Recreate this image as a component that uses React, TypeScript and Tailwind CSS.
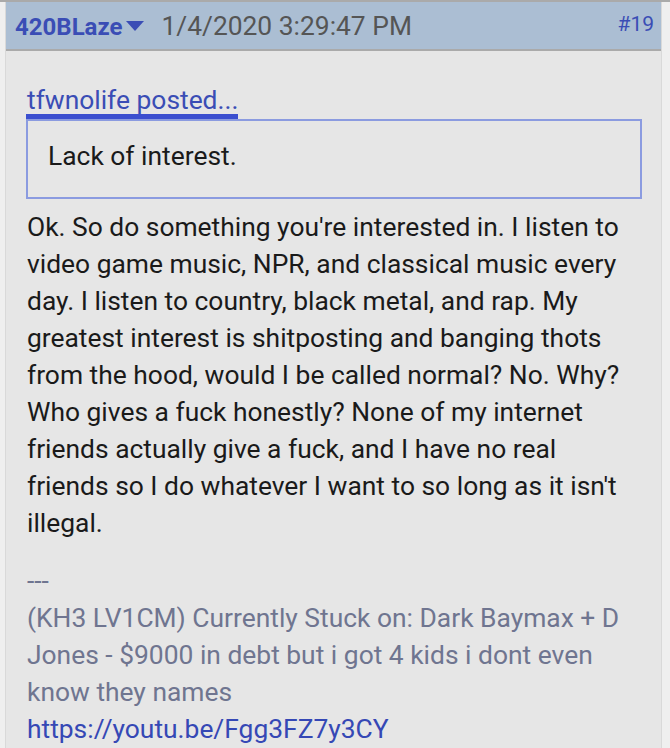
import React from "react";

export default function App() {
  return (
    <div className="min-h-[748px] w-full bg-[#efefef] font-['Roboto',sans-serif]">
      <div className="h-[2px] w-full bg-[#aaaaaa]" />
      <div className="ml-[5px] mr-[8px] border-x border-[#d9d9d9] bg-[#e6e6e6] min-h-[746px]">
        <div className="flex h-[49px] items-center border-b-2 border-[#aaaaaa] bg-[#abbed3] pt-[3px] pl-[9px] pr-[7px]">
          <span className="text-[24px] font-bold text-[#3a4db5]">420BLaze</span>
          <svg width="18" height="10" viewBox="0 0 18 10" className="ml-[4px] mt-[-2px]">
            <polygon points="0,0 18,0 9,10" fill="#3a4db5" />
          </svg>
          <span className="ml-[17px] text-[26.4px] text-[#555555]">1/4/2020 3:29:47 PM</span>
          <span className="ml-auto self-start pt-[4px] text-[21px] leading-normal text-[#3a4db5]">#19</span>
        </div>
        <div className="w-[655px] pl-[20px] pr-[19px] pt-[36px]">
          <div>
            <span className="inline-block border-b-[5px] border-[#3b4fcf] pl-[1px] text-[26.4px] leading-[27px] text-[#3a4db5]">
              tfwnolife posted...
            </span>
          </div>
          <div className="h-[80px] w-[616px] border-2 border-[#8b9be0] pl-[20px] pt-[20px] text-[26.4px] leading-[30px] text-[#1a1a1a]">
            Lack of interest.
          </div>
          <p className="mt-[10px] w-[616px] pl-[1px] text-[26.4px] leading-[37px] text-[#1a1a1a]">
            Ok. So do something you're interested in. I listen to video game music, NPR, and classical music every day. I listen to country, black metal, and rap. My greatest interest is shitposting and banging thots from the hood, would I be called normal? No. Why? Who gives a fuck honestly? None of my internet friends actually give a fuck, and I have no real friends so I do whatever I want to so long as it isn't illegal.
          </p>
          <div className="mt-[21px] w-[616px] pl-[1px] text-[26.4px] leading-[37px] text-[#6f7590]">
            <div>---</div>
            <div>
              (KH3 LV1CM) Currently Stuck on: Dark Baymax + D Jones - $9000 in debt but i got 4 kids i dont even know they names
            </div>
            <div className="text-[#3548b5]">https://youtu.be/Fgg3FZ7y3CY</div>
          </div>
        </div>
      </div>
    </div>
  );
}
